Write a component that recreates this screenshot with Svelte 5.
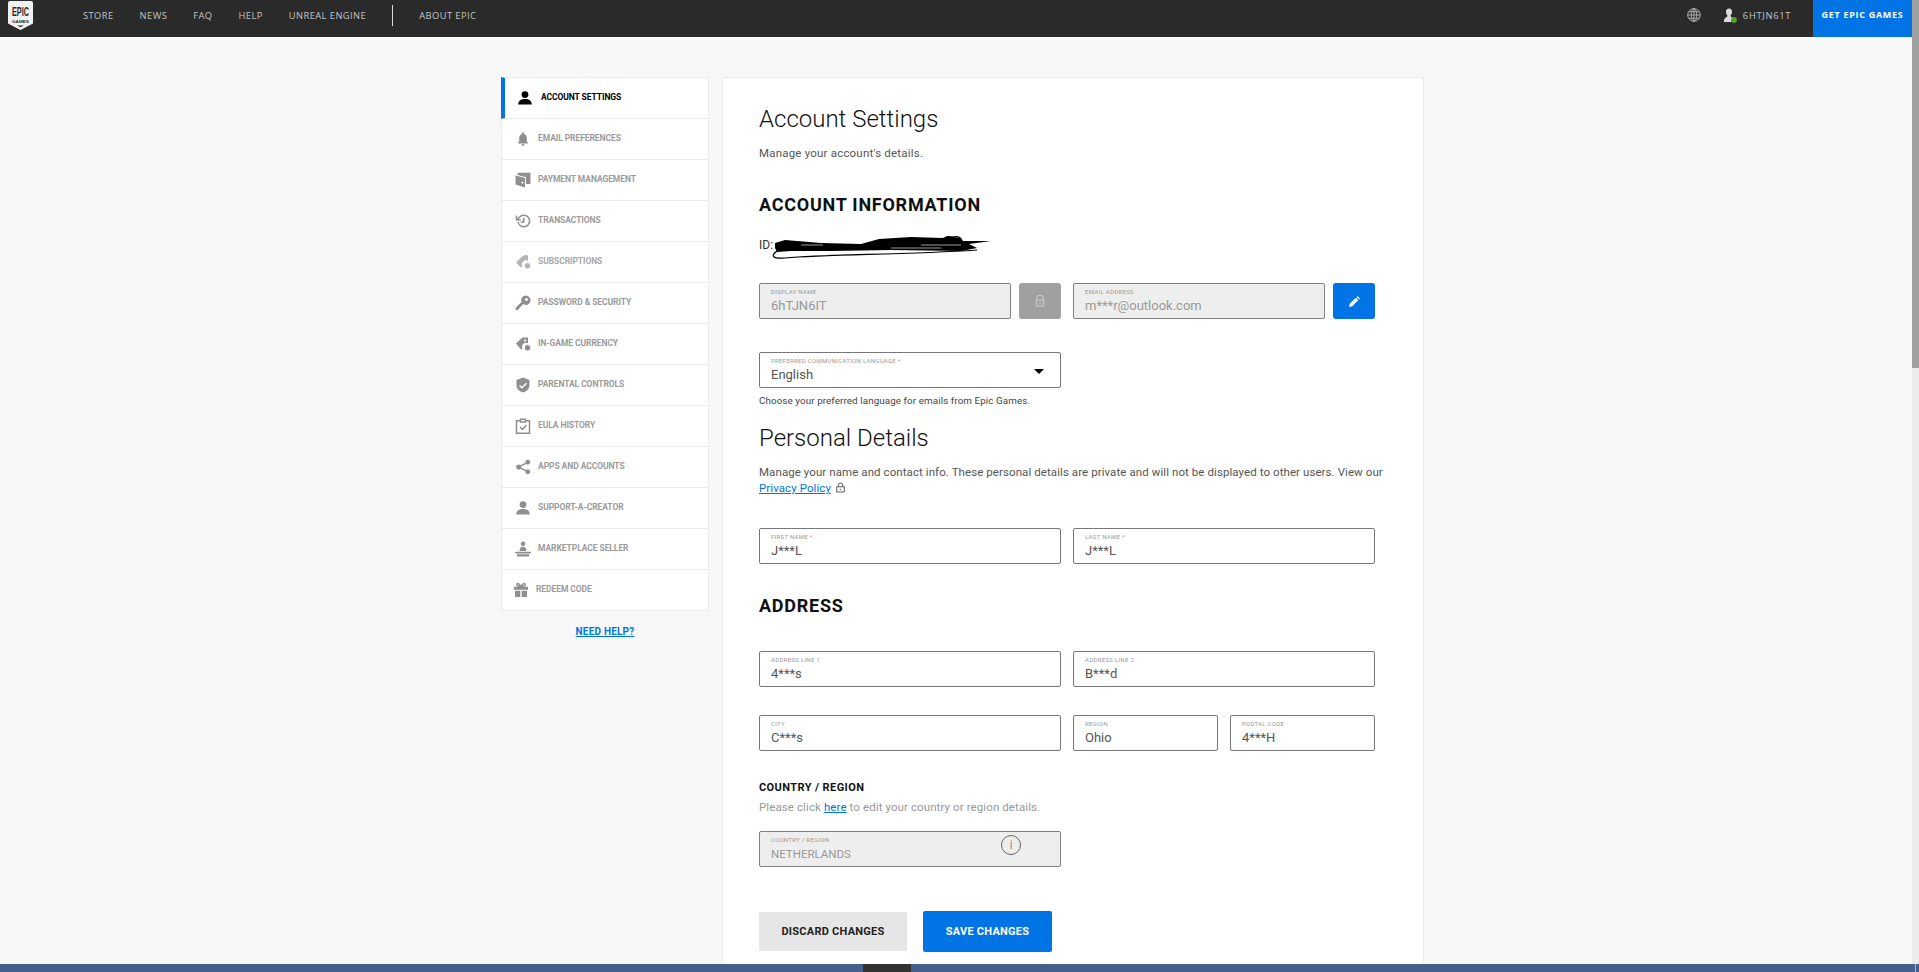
<script lang="ts">
	type Icon = { fill?: string; stroke?: string; cut?: string };

	const person = 'M8 1.2a3.4 3.4 0 1 1 0 6.8a3.4 3.4 0 0 1 0-6.8zM1.2 14.4c0-3.6 3-5.4 6.8-5.4s6.8 1.8 6.8 5.4z';

	const icons: Record<string, Icon> = {
		person: { fill: person },
		bell: { fill: 'M8 1.2c-.6 0-1 .4-1 1v.8C5.300 3.500 4.200 5 4.200 7v3.200L2.800 12.400h10.400L11.800 10.200V7c0-2-1.100-3.500-2.800-4v-.8c0-.6-.4-1-1-1zM6.400 13.200a1.600 1.600 0 0 0 3.200 0z' },
		wallet: { fill: 'M.5 3.500L10 6v9.500L.5 12.500zM2.500 .8H15.500V12H11V5.200L2.500 3zM7.500 9.500a1 1 0 1 0 .01 0z' },
		history: { stroke: 'M3 8.500a5.800 5.800 0 1 0 1.400-4.300L1.800 6.500M1.500 2.500v4.300h4.300M8.800 4.800V9H5.800' },
		sub: { fill: 'M1 8.500L7 2.500l3-1.500 3 .5v5.500a4 4 0 0 0-5.500 5.500L6 13.500z', cut: 'M12.500 8.500a3.300 3.300 0 1 1 0 6.600a3.300 3.300 0 0 1 0-6.600z' },
		key: { fill: 'M10.800 .5a4.700 4.700 0 1 1-2.600 8.600L3 14.800.8 15.200.6 12.800l6-5.800a4.700 4.700 0 0 1 4.200-6.500zM11.500 3a1.500 1.500 0 1 0 .01 0z' },
		tag: { fill: 'M1 7.500L7.500 1.500H13v5.800a4 4 0 0 0-5.300 5.700L6 13.500zM10 3.500a1 1 0 1 0 .01 0z', cut: 'M12.500 8.500a3.300 3.300 0 1 1 0 6.600a3.300 3.300 0 0 1 0-6.600z' },
		shield: { fill: 'M8 .5L14.500 3V8.200c0 3.800-3 6-6.500 7.300C4.500 14.200 1.500 12 1.500 8.200V3zM5 8l-1 1 3 2.800 5-5-1-1-4 4z' },
		clip: { stroke: 'M5 2.800H1.500V15.200h13V2.800H11M5.500 1.300h5V4h-5zM5 9l2.500 2.500L11.500 7' },
		share: { fill: 'M12.800 .8a2.400 2.400 0 1 1-1.700 4.100L6 7.400a2.400 2.400 0 0 1 0 1.200l5.100 2.500a2.400 2.400 0 1 1-.6 1.200L5.300 9.700a2.400 2.400 0 1 1 0-3.400l5.200-2.600a2.400 2.400 0 0 1 2.300-2.900z' },
		seller: { fill: 'M8 .5a2.300 2.300 0 1 1 0 4.600a2.300 2.300 0 0 1 0-4.600zM4.500 10c0-3 1.500-4.300 3.500-4.300S11.500 7 11.500 10zM.2 10.800h15.600v1.700H.2zM2 13.200h12v2.300H2z' },
		gift: { fill: 'M1 4.800h14v3H1zM2 8.800h5.300v6.200H2zM8.700 8.800H14v6.200H8.700z', stroke: 'M8 4.500C6 4.500 3.800 3.800 3.800 2.500S6 .8 8 4.500C10 .8 12.200 1.200 12.200 2.500S10 4.500 8 4.500' }
	};

	const menu = [
		{ label: 'Account Settings', icon: 'person', kind: 'active' },
		{ label: 'Email Preferences', icon: 'bell' },
		{ label: 'Payment Management', icon: 'wallet' },
		{ label: 'Transactions', icon: 'history' },
		{ label: 'Subscriptions', icon: 'sub', kind: 'faint' },
		{ label: 'Password & Security', icon: 'key' },
		{ label: 'In-Game Currency', icon: 'tag' },
		{ label: 'Parental Controls', icon: 'shield' },
		{ label: 'EULA History', icon: 'clip' },
		{ label: 'Apps and Accounts', icon: 'share' },
		{ label: 'Support-A-Creator', icon: 'person' },
		{ label: 'Marketplace Seller', icon: 'seller' },
		{ label: 'Redeem Code', icon: 'gift', kind: 'shift' }
	];

	const nav = ['Store', 'News', 'FAQ', 'Help', 'Unreal Engine'];
</script>

{#snippet field(label: string, value: string, extra = '')}
	<div class="field {extra}">
		<span class="field-label">{label}</span>
		<span class="field-value">{value}</span>
	</div>
{/snippet}

<div class="shell">
	<div class="window">
		<div class="page">
			<header class="topbar">
				<svg class="logo" viewBox="0 0 25 29" width="25" height="29">
					<path fill="#f0f0f0" d="M2 0H23a2 2 0 0 1 2 2V22.500L12.500 29 0 22.500V2a2 2 0 0 1 2-2z" />
					<text transform="translate(4 15) scale(.56 1)" class="logo-epic">EPIC</text>
					<text transform="translate(4 21.500) scale(1.150 1)" class="logo-games">GAMES</text>
					<path d="M9 24.500H16L12.500 26.300z" fill="#2a2a2a" />
				</svg>
				<nav class="nav">
					{#each nav as item}
						<span>{item}</span>
					{/each}
					<i class="nav-sep"></i>
					<span>About Epic</span>
				</nav>
				<svg class="globe" viewBox="0 0 14 14" width="14" height="14">
					<g fill="none" stroke="#b9b9b9" stroke-width=".9">
						<circle cx="7" cy="7" r="6.300" />
						<ellipse cx="7" cy="7" rx="2.800" ry="6.300" />
						<path d="M7 .7V13.300M.7 7H13.300M1.600 3.800H12.400M1.600 10.200H12.400" />
					</g>
				</svg>
				<div class="user">
					<svg viewBox="0 0 14 15" width="14" height="15">
						<path fill="#dcdcdc" d="M6 .5a3 3 0 0 1 3 3.400c0 1.500-.9 2.600-1.300 3.300v1.300L9.500 9.800A3.500 3.500 0 0 0 8.500 14H.8c0-3 1.500-4.400 3.500-5.500V7.200C3.800 6.500 3 5.400 3 3.900A3 3 0 0 1 6 .5z" />
						<circle cx="11" cy="12" r="2.900" fill="#5a9e2f" />
					</svg>
					<span>6HTJN61T</span>
				</div>
				<div class="get">Get Epic Games</div>
			</header>

			<div class="content">
				<aside>
					<ul class="menu">
						{#each menu as item}
							<li class="menu-item {item.kind ?? ''}">
								<svg viewBox="0 0 16 16" width="16" height="16">
									{#if icons[item.icon].fill}
										<path class="icon-fill" fill-rule="evenodd" d={icons[item.icon].fill} />
									{/if}
									{#if icons[item.icon].stroke}
										<path class="icon-stroke" d={icons[item.icon].stroke} />
									{/if}
									{#if icons[item.icon].cut}
										<path class="icon-fill icon-cut" d={icons[item.icon].cut} />
									{/if}
								</svg>
								<span class="menu-label">{item.label}</span>
							</li>
						{/each}
					</ul>
					<a class="help" href="#help">NEED HELP?</a>
				</aside>

				<main class="card">
					<h1>Account Settings</h1>
					<p class="lead">Manage your account's details.</p>

					<h2 class="h-account">Account Information</h2>
					<div class="id-row">
						ID:
						<svg class="scribble" viewBox="0 0 221 23" width="221" height="23">
							<path fill="#000" d="M4 7L14 4 50 7 90 8 108 3 140 1 172 2 176 0 190 2 192 5 220 5 198 8 206 12 190 15 120 14 60 15 20 15 6 16 4 12z" />
							<path fill="none" stroke="#000" stroke-width="1.200" d="M6 15C-1 20 2 23 14 22C60 18 130 19 206 14M176 1C180 -1 192 0 190 5" />
							<path fill="none" stroke="#fff" stroke-width=".6" d="M30 9H52M120 12H170M150 9H190" />
						</svg>
					</div>

					<div class="row row-two account">
						<div class="combo">
							{@render field('Display Name', '6hTJN6IT', 'off')}
							<div class="side-btn locked">
								<svg viewBox="0 0 12 14" width="10" height="12">
									<path fill="none" stroke="#c9c9c9" stroke-width="1.300" d="M2 6V4a4 4 0 0 1 8 0v2M1.500 6h9v7h-9zM5 9.500h2" />
								</svg>
							</div>
						</div>
						<div class="combo">
							{@render field('Email Address', 'm***r@outlook.com', 'off')}
							<div class="side-btn edit">
								<svg viewBox="0 0 12 12" width="11" height="11">
									<path fill="#fff" d="M0 12L.8 8.500 7.500 1.800 10.200 4.500 3.500 11.200zM8.300 1L9.300 0 12 2.700 11 3.700z" />
								</svg>
							</div>
						</div>
					</div>

					<div class="select">
						<span class="field-label">Preferred Communication Language *</span>
						<span class="field-value">English</span>
						<i class="caret"></i>
					</div>
					<p class="hint">Choose your preferred language for emails from Epic Games.</p>

					<h1 class="h-personal">Personal Details</h1>
					<p class="copy">
						Manage your name and contact info. These personal details are private and will not be displayed to other users. View our
						<a href="#privacy">Privacy Policy</a>
						<svg class="mini-lock" viewBox="0 0 12 14" width="9" height="11">
							<path fill="none" stroke="#555" stroke-width="1.300" d="M3 6V4a3 3 0 0 1 6 0v2M1 6h10v7H1zM5 9.500h2" />
						</svg>
					</p>

					<div class="row row-two names">
						{@render field('First Name *', 'J***L')}
						{@render field('Last Name *', 'J***L')}
					</div>

					<h2 class="h-address">Address</h2>
					<div class="row row-two addr-1">
						{@render field('Address Line 1', '4***s')}
						{@render field('Address Line 2', 'B***d')}
					</div>
					<div class="row row-three addr-2">
						{@render field('City', 'C***s')}
						{@render field('Region', 'Ohio')}
						{@render field('Postal Code', '4***H')}
					</div>

					<h3>Country / Region</h3>
					<p class="country-note">Please click <a href="#here">here</a> to edit your country or region details.</p>
					<div class="country">
						<div class="field off">
							<span class="field-label">Country / Region</span>
							<span class="field-value">NETHERLANDS</span>
							<span class="info">i</span>
						</div>
					</div>

					<div class="actions">
						<button class="discard">Discard Changes</button>
						<button class="save">Save Changes</button>
					</div>
				</main>
			</div>
		</div>
		<div class="scrollbar"><div class="thumb"></div></div>
	</div>
	<footer class="taskbar">
		<i class="task-app"></i>
		<span class="clock">23:38</span>
		<i class="task-edge"></i>
	</footer>
</div>

<style>
	:global(body) {
		margin: 0;
		background: #f8f8f8;
	}
	.shell {
		height: 972px;
		display: flex;
		flex-direction: column;
		overflow: hidden;
		font-family: Roboto, sans-serif;
		color: #111;
	}
	.window {
		height: 964px;
		display: flex;
		overflow: hidden;
	}
	.page {
		flex: 1;
		min-width: 0;
		background: #f8f8f8;
	}
	.scrollbar {
		width: 7px;
		background: #ebebeb;
	}
	.thumb {
		height: 368px;
		background: #a0a0a0;
	}

	/* top bar */
	.topbar {
		height: 37px;
		background: #2a2a2a;
		display: flex;
		align-items: flex-start;
		font-family: 'Open Sans', sans-serif;
		text-transform: uppercase;
		color: #c4c4c4;
	}
	.logo {
		margin: 1px 0 0 8px;
	}
	.logo-epic {
		font-family: 'Liberation Sans', sans-serif;
		font-size: 13px;
		font-weight: 700;
		fill: #2a2a2a;
	}
	.logo-games {
		font-family: 'Liberation Sans', sans-serif;
		font-size: 4px;
		font-weight: 700;
		fill: #2a2a2a;
	}
	.nav {
		display: flex;
		align-items: center;
		gap: 26px;
		height: 30px;
		margin-left: 50px;
		font-size: 9.300px;
		letter-spacing: 0.45px;
	}
	.nav-sep {
		width: 1px;
		height: 21px;
		background: #ddd;
	}
	.globe {
		margin: 8px 0 0 auto;
	}
	.user {
		display: flex;
		align-items: center;
		gap: 6px;
		height: 30px;
		margin-left: 22px;
		font-size: 9.300px;
		letter-spacing: 0.7px;
	}
	.get {
		width: 99px;
		height: 37px;
		margin-left: 22px;
		padding-top: 8px;
		box-sizing: border-box;
		background: #0074e4;
		color: #fff;
		font-size: 9px;
		font-weight: 700;
		letter-spacing: 0.7px;
		text-align: center;
	}

	.content {
		display: flex;
		align-items: flex-start;
		gap: 13px;
		padding: 40px 0 0 501px;
		height: 927px;
		box-sizing: border-box;
	}

	/* side menu */
	aside {
		width: 208px;
	}
	.menu {
		list-style: none;
		margin: 0;
		padding: 0;
		background: #fff;
		border: 1px solid #ebebeb;
		border-bottom: 0;
	}
	.menu-item {
		height: 41px;
		box-sizing: border-box;
		border-bottom: 1px solid #ebebeb;
		display: flex;
		align-items: center;
		gap: 7px;
		padding-left: 13px;
		font-size: 8.500px;
		font-weight: 700;
		letter-spacing: -0.08px;
		text-transform: uppercase;
		color: #9b9b9b;
	}
	.menu-label {
		margin-top: -2px;
	}
	.icon-fill {
		fill: #8f8f8f;
	}
	.icon-stroke {
		fill: none;
		stroke: #8f8f8f;
		stroke-width: 1.500;
	}
	.icon-cut {
		stroke: #fff;
		stroke-width: 1;
	}
	.menu-item.active {
		margin: -1px 0 0 -1px;
		padding-left: 12px;
		border-left: 4px solid #0074e4;
		border-top: 1px solid #ebebeb;
		height: 42px;
		color: #000;
		gap: 8px;
	}
	.menu-item.active .icon-fill {
		fill: #000;
	}
	.menu-item.faint {
		color: #a8a8a8;
	}
	.menu-item.faint .icon-fill {
		fill: #b5b5b5;
	}
	.menu-item.shift {
		padding-left: 11px;
		gap: 7px;
	}
	.help {
		display: block;
		margin-top: 14px;
		text-align: center;
		font-size: 10px;
		font-weight: 700;
		letter-spacing: 0.2px;
		color: #0074e4;
		line-height: 14px;
	}

	/* card */
	.card {
		width: 664px;
		height: 960px;
		flex: none;
		padding: 26px 0 0 36px;
		box-sizing: content-box;
		background: #fff;
		border: 1px solid #ebebeb;
	}
	h1 {
		margin: 0;
		font-size: 24px;
		font-weight: 300;
		line-height: 30px;
		color: #111;
	}
	.lead {
		margin: 11px 0 0;
		font-size: 11.500px;
		line-height: 16px;
		color: #555;
		letter-spacing: 0.2px;
	}
	h2 {
		margin: 0;
		font-size: 18px;
		font-weight: 700;
		line-height: 24px;
		letter-spacing: 0.75px;
		text-transform: uppercase;
		color: #111;
	}
	.h-account {
		margin-top: 32px;
	}
	.id-row {
		position: relative;
		margin-top: 20px;
		font-size: 12px;
		line-height: 16px;
		color: #333;
	}
	.scribble {
		position: absolute;
		left: 12px;
		top: -1px;
	}
	.row {
		display: grid;
		width: 616px;
	}
	.row-two {
		grid-template-columns: 302px 302px;
		column-gap: 12px;
	}
	.row-three {
		grid-template-columns: 302px 145px 145px;
		column-gap: 12px;
	}
	.account {
		margin-top: 30px;
	}
	.combo {
		display: flex;
		gap: 8px;
	}
	.combo .field {
		flex: 1;
	}
	.names {
		margin-top: 32px;
	}
	.addr-1 {
		margin-top: 33px;
	}
	.addr-2 {
		margin-top: 28px;
	}
	.field,
	.select {
		position: relative;
		height: 36px;
		box-sizing: border-box;
		border: 1px solid #777;
		border-radius: 2px;
		padding: 4px 0 0 11px;
		background: #fff;
	}
	.field.off {
		background: #eee;
		border-color: #808080;
	}
	.field-label {
		display: block;
		font-size: 6px;
		line-height: 8px;
		letter-spacing: 0.3px;
		text-transform: uppercase;
		color: #999;
	}
	.field-value {
		display: block;
		margin-top: 2px;
		font-size: 13px;
		line-height: 16px;
		color: #555;
	}
	.off .field-value {
		color: #999;
	}
	.country .field-value {
		font-size: 11.500px;
	}
	.side-btn {
		display: flex;
		align-items: center;
		justify-content: center;
		flex: none;
		width: 42px;
		height: 36px;
		border-radius: 3px;
	}
	.locked {
		background: #a0a0a0;
	}
	.edit {
		background: #0074e4;
	}
	.select {
		width: 302px;
		margin-top: 33px;
	}
	.caret {
		position: absolute;
		right: 16px;
		top: 16px;
		border: 5px solid transparent;
		border-top: 5px solid #000;
		border-bottom: 0;
	}
	.hint {
		margin: 6px 0 0;
		font-size: 9.800px;
		line-height: 14px;
		color: #444;
		letter-spacing: 0.1px;
	}
	.h-personal {
		margin-top: 15px;
	}
	.copy {
		width: 630px;
		margin: 11px 0 0;
		font-size: 11.500px;
		line-height: 16px;
		letter-spacing: 0.08px;
		color: #555;
	}
	.copy a,
	.country-note a {
		color: #0074e4;
	}
	.mini-lock {
		margin-left: 2px;
		vertical-align: -1px;
	}
	.h-address {
		margin-top: 30px;
	}
	h3 {
		margin: 30px 0 0;
		font-size: 11px;
		font-weight: 700;
		line-height: 14px;
		letter-spacing: 0.4px;
		text-transform: uppercase;
		color: #111;
	}
	.country-note {
		margin: 4px 0 0;
		font-size: 11.500px;
		line-height: 16px;
		letter-spacing: 0.1px;
		color: #999;
	}
	.country {
		width: 302px;
		margin-top: 16px;
	}
	.info {
		position: absolute;
		left: 241px;
		top: 3px;
		width: 20px;
		height: 20px;
		box-sizing: border-box;
		border: 1px solid #666;
		border-radius: 50%;
		text-align: center;
		font-size: 12px;
		font-weight: 300;
		line-height: 19px;
		color: #555;
	}
	.actions {
		display: flex;
		align-items: center;
		gap: 16px;
		margin-top: 44px;
	}
	button {
		border: 0;
		border-radius: 2px;
		font-family: Roboto, sans-serif;
		font-size: 11px;
		font-weight: 700;
		letter-spacing: 0.25px;
		text-transform: uppercase;
		padding: 0;
	}
	.discard {
		width: 148px;
		height: 39px;
		background: #e6e6e6;
		color: #222;
	}
	.save {
		width: 129px;
		height: 41px;
		background: #0074e4;
		color: #fff;
	}

	/* windows taskbar sliver */
	.taskbar {
		height: 8px;
		display: flex;
		background: #436189;
		overflow: hidden;
	}
	.task-app {
		width: 48px;
		margin-left: 863px;
		background: #333;
	}
	.clock {
		margin-left: auto;
		padding-top: 6px;
		font-family: 'Open Sans', sans-serif;
		font-size: 10px;
		line-height: 12px;
		color: #e8e8e8;
	}
	.task-edge {
		width: 1px;
		margin: 0 3px 0 22px;
		background: #a9b7ca;
	}
</style>
